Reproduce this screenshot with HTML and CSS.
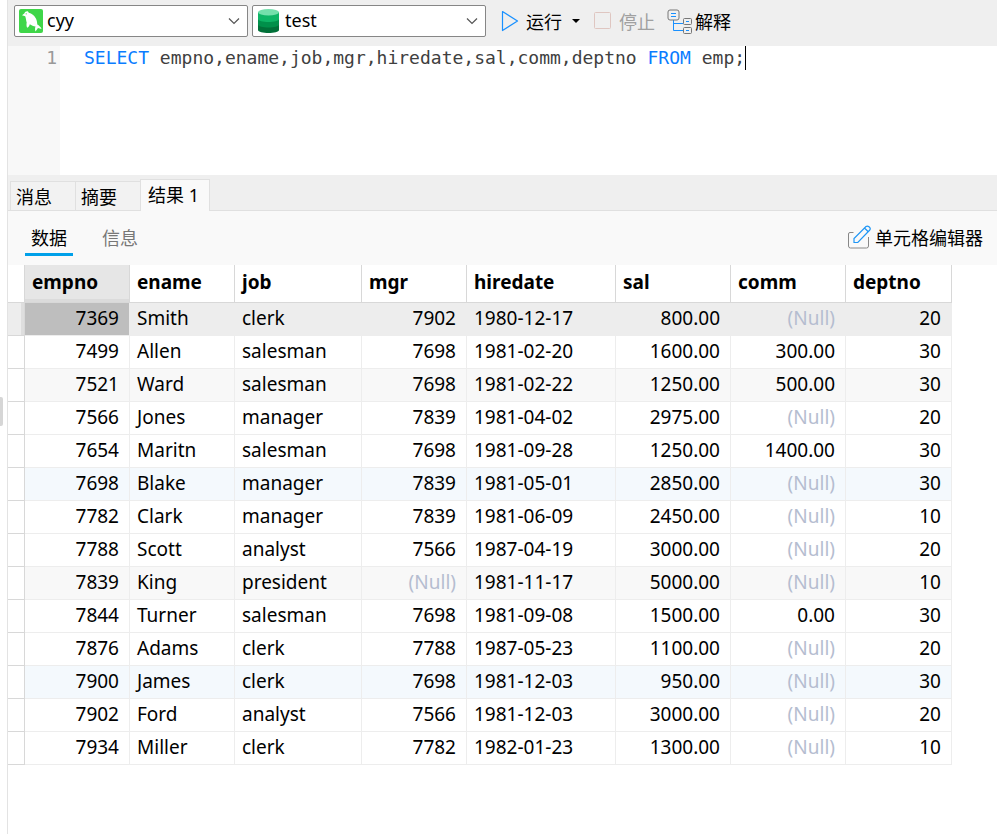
FILE: index.html
```html
<!DOCTYPE html>
<html lang="zh-CN">
<head>
  <meta charset="UTF-8">
  <meta name="viewport" content="width=device-width, initial-scale=1.0">
  <title>test - 查询</title>
  <link rel="stylesheet" href="styles.css">
</head>
<body>
  <div class="side"><span class="side-handle"></span></div>

  <main class="main">
    <header class="toolbar">
      <div class="combo">
        <svg class="combo-icon" width="24" height="24" viewBox="0 0 24 24">
          <rect width="24" height="24" rx="2" fill="#3fd649"/>
          <path d="M3 6.200L5.300 4.500C6 2.800 7.500 2 9 2.500L9.800 3.800C14 5 17.500 8.500 18 13L18.300 15.500C20 16.500 22 18 22.500 20L19 19L16.500 22.500C15.800 20.500 16 18.800 16.500 17.500C14.500 17.200 12.500 16.500 10.800 15.300C10.300 17 9.500 18.200 8.200 18.800C7.500 17.500 7.300 15.500 7.700 13.500C7 11.500 7 9 6.200 7.300Z" fill="#fff"/>
          <circle cx="7.200" cy="4.800" r="0.600" fill="#3fd649"/>
        </svg>
        <select aria-label="连接">
          <option>cyy</option>
        </select>
        <svg class="combo-arrow" width="12" height="8" viewBox="0 0 12 8"><path d="M1 1.500L6 6.500L11 1.500" fill="none" stroke="#555" stroke-width="1.200"/></svg>
      </div>
      <div class="combo">
        <svg class="combo-icon" width="24" height="24" viewBox="0 0 24 24">
          <path d="M1 15v6c0 4 21 4 21 0v-6z" fill="#007038"/>
          <path d="M1 9v6.500c0 4 21 4 21 0V9z" fill="#00904a"/>
          <path d="M1 3v7c0 4 21 4 21 0V3z" fill="#0eb566"/>
          <ellipse cx="11.500" cy="3.200" rx="10.500" ry="3.200" fill="#74e0ac"/>
        </svg>
        <select aria-label="数据库">
          <option>test</option>
        </select>
        <svg class="combo-arrow" width="12" height="8" viewBox="0 0 12 8"><path d="M1 1.500L6 6.500L11 1.500" fill="none" stroke="#555" stroke-width="1.200"/></svg>
      </div>
      <button class="tool run">
        <svg width="18" height="22" viewBox="0 0 18 22"><path d="M1.500 1.500L16.500 11L1.500 20.500Z" fill="none" stroke="#1890ff" stroke-width="1.200" stroke-linejoin="round"/></svg>
        <span>运行</span>
        <svg class="caret" width="8" height="4" viewBox="0 0 8 4"><path d="M0 0H8L4 4Z"/></svg>
      </button>
      <button class="tool stop" disabled>
        <svg width="18" height="18" viewBox="0 0 18 18"><rect x="0.500" y="0.500" width="16" height="16" rx="1" fill="none" stroke="#dfc6c1"/></svg>
        <span>停止</span>
      </button>
      <button class="tool explain">
        <svg width="25" height="25" viewBox="0 0 25 25" fill="none">
          <path d="M6.500 11V21.500H16M6.500 14.500H16" stroke="#1890ff"/>
          <rect x="1" y="1" width="11" height="10" rx="2" stroke="#777"/>
          <path d="M4 4.500H9M4 7.500H9M19 12.500H22M19 21.500H22" stroke="#1890ff"/>
          <rect x="16.500" y="9.500" width="8" height="6" rx="1" stroke="#777"/>
          <rect x="16.500" y="18.500" width="8" height="6" rx="1" stroke="#777"/>
        </svg>
        <span>解释</span>
      </button>
    </header>

    <section class="editor">
      <div class="gutter">1</div>
      <pre class="code"><code><b>SELECT</b> empno,ename,job,mgr,hiredate,sal,comm,deptno <b>FROM</b> emp;</code><i class="cursor"></i></pre>
    </section>

    <nav class="tabs">
      <button>消息</button>
      <button>摘要</button>
      <button class="active">结果 1</button>
    </nav>

    <div class="subbar">
      <button class="subtab active">数据</button>
      <button class="subtab">信息</button>
      <button class="tool cell-editor">
        <svg width="24" height="24" viewBox="0 0 24 24" fill="none">
          <path d="M6.500 7.500H3Q1.500 7.500 1.500 9V21Q1.500 23 3.500 23H19.500Q21.500 23 21.500 21V12" stroke="#888"/>
          <path d="M7 17.500V13.500L19 1.500Q20.500 0.500 22 1.800Q24 3.500 22.800 5L10.800 17.500ZM17.500 3L21.500 7" stroke="#1e96f5" stroke-width="1.200"/>
        </svg>
        <span>单元格编辑器</span>
      </button>
    </div>

    <table class="grid">
      <colgroup>
        <col class="c-mark"><col class="c-no"><col class="c-no"><col class="c-job"><col class="c-no">
        <col class="c-date"><col class="c-money"><col class="c-money"><col class="c-dept">
      </colgroup>
      <thead>
        <tr><th></th><th class="current">empno</th><th>ename</th><th>job</th><th>mgr</th><th>hiredate</th><th>sal</th><th>comm</th><th>deptno</th></tr>
      </thead>
      <tbody id="rows"></tbody>
    </table>
  </main>

  <script src="script.js"></script>
</body>
</html>
```
FILE: styles.css
```css
* { box-sizing: border-box; }
body { margin: 0; display: flex; min-height: 100vh; background: #fff; color: #000; font-family: "Noto Sans", "Noto Sans CJK SC", sans-serif; font-size: 18px; }
button, select { font: inherit; color: inherit; border: 0; background: none; padding: 0; }

.side { width: 8px; flex: none; display: flex; align-items: center; padding-bottom: 12px; border-right: 1px solid #e3e3e3; }
.side-handle { width: 3px; height: 29px; background: #d6d6d6; border-radius: 0 2px 2px 0; }
.main { flex: 1; min-width: 0; }

/* toolbar */
.toolbar { display: flex; align-items: center; height: 46px; padding: 0 6px 4px; background: #efefef; }
.combo { position: relative; width: 234px; height: 32px; margin-right: 4px; background: #fff; border: 1px solid #868686; border-radius: 2px; }
.combo select { width: 100%; height: 30px; padding: 0 28px 2px 32px; appearance: none; outline: 0; }
.combo-icon { position: absolute; left: 4px; top: 3px; pointer-events: none; }
.combo-arrow { position: absolute; right: 7px; top: 11px; pointer-events: none; }
.tool { display: flex; align-items: center; height: 36px; white-space: nowrap; }
.run { margin-left: 11px; gap: 7px; }
.caret { margin-left: 3px; }
.stop { margin-left: 14px; gap: 7px; color: #a0a0a0; }
.explain { margin-left: 12px; gap: 3px; }

/* sql editor */
.editor { display: flex; height: 129px; font: 18px/24px "DejaVu Sans Mono", monospace; }
.gutter { width: 52px; padding-right: 3px; text-align: right; color: #999; background: #f8f8f8; }
.code { display: flex; margin: 0; padding-left: 24px; font: inherit; color: #404040; }
.code code { font: inherit; }
.code b { font-weight: normal; color: #0a7cff; }
.cursor { width: 1px; height: 24px; background: #000; }

/* result tabs */
.tabs { display: flex; align-items: flex-end; height: 36px; padding-left: 2px; background: #efefef; box-shadow: inset 0 -1px #e0e0e0; }
.tabs button { width: 65px; height: 30px; padding-left: 5px; text-align: left; background: #f2f2f2; border: 1px solid #e0e0e0; border-right: 0; }
.tabs .active { width: 70px; height: 32px; padding: 0 0 4px 7px; background: #f9f9f9; border-right: 1px solid #e0e0e0; border-bottom: 0; }

.subbar { display: flex; align-items: center; height: 54px; padding: 0 14px 0 17px; background: #f9f9f9; }
.subtab { width: 48px; height: 36px; margin-right: 23px; color: #777; border-bottom: 3px solid transparent; }
.subtab.active { color: #000; border-color: #00a0e9; }
.cell-editor { margin-left: auto; padding-bottom: 2px; gap: 4px; }

/* data grid */
.grid { width: 944px; table-layout: fixed; border-collapse: separate; border-spacing: 0; font-size: 19px; line-height: 24px; }
.c-mark { width: 17px; }
.c-no { width: 105px; }
.c-job { width: 127px; }
.c-date { width: 149px; }
.c-money { width: 115px; }
.c-dept { width: 106px; }
.grid th { height: 38px; padding: 0 7px 3px; text-align: left; border-right: 1px solid #d8d8d8; border-bottom: 1px solid #d8d8d8; }
.grid th.current { background: #e6e6e6; box-shadow: inset 0 -3px #dbdbdb; }
.grid td { height: 33px; padding: 0 7px 2px; border-right: 1px solid #ededed; border-bottom: 1px solid #ededed; }
.grid td.num { padding-right: 10px; text-align: right; }
.grid td.null { color: #b5bdd0; }
.grid td:first-child { border-color: #d8d8d8; }
.gray td:not(:first-child) { background: #f8f8f8; }
.blue td:not(:first-child) { background: #f4f9fd; }
.selected td { background: #ededed; }
.selected td:first-child { box-shadow: inset -3px 0 #dedede; }
.selected td:nth-child(2) { background: #bebebe; }
```
FILE: script.js
```js
const employees = [
  [7369, "Smith", "clerk", 7902, "1980-12-17", "800.00", null, 20],
  [7499, "Allen", "salesman", 7698, "1981-02-20", "1600.00", "300.00", 30],
  [7521, "Ward", "salesman", 7698, "1981-02-22", "1250.00", "500.00", 30],
  [7566, "Jones", "manager", 7839, "1981-04-02", "2975.00", null, 20],
  [7654, "Maritn", "salesman", 7698, "1981-09-28", "1250.00", "1400.00", 30],
  [7698, "Blake", "manager", 7839, "1981-05-01", "2850.00", null, 30],
  [7782, "Clark", "manager", 7839, "1981-06-09", "2450.00", null, 10],
  [7788, "Scott", "analyst", 7566, "1987-04-19", "3000.00", null, 20],
  [7839, "King", "president", null, "1981-11-17", "5000.00", null, 10],
  [7844, "Turner", "salesman", 7698, "1981-09-08", "1500.00", "0.00", 30],
  [7876, "Adams", "clerk", 7788, "1987-05-23", "1100.00", null, 20],
  [7900, "James", "clerk", 7698, "1981-12-03", "950.00", null, 30],
  [7902, "Ford", "analyst", 7566, "1981-12-03", "3000.00", null, 20],
  [7934, "Miller", "clerk", 7782, "1982-01-23", "1300.00", null, 10]
];
const numeric = [0, 3, 5, 6, 7];
const rowClass = { 0: "selected", 2: "gray", 5: "blue", 8: "gray", 11: "blue" };
const tbody = document.getElementById("rows");

employees.forEach((emp, i) => {
  const tr = tbody.insertRow();
  tr.className = rowClass[i] || "";
  tr.insertCell();
  emp.forEach((value, col) => {
    const td = tr.insertCell();
    td.textContent = value === null ? "(Null)" : value;
    if (numeric.includes(col)) td.classList.add("num");
    if (value === null) td.classList.add("null");
  });
});
```
